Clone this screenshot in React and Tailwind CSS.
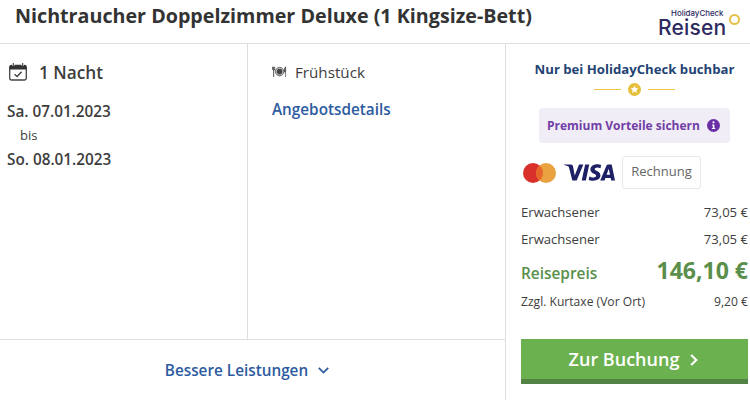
import React from "react";
import { SiVisa } from "react-icons/si";

const people = [
  { label: "Erwachsener", price: "73,05 €" },
  { label: "Erwachsener", price: "73,05 €" },
];

const CalendarIcon = () => (
  <svg className="w-[18px] h-[18px] shrink-0" viewBox="0 0 18 18" fill="none">
    <rect x="0.7" y="2.7" width="16.6" height="14.3" rx="1.8" stroke="#444" strokeWidth="1.3" />
    <path d="M0.5 6.4V4Q0.5 1.8 2.7 1.8H15.3Q17.5 1.8 17.5 4V6.4Z" fill="#333" />
    <path d="M4.3 0.4V2.8M13.7 0.4V2.8" stroke="#fff" strokeWidth="2.4" />
    <path d="M4.3 0.2V2.6M13.7 0.2V2.6" stroke="#444" strokeWidth="1.1" strokeLinecap="round" />
    <path d="M5.6 11.2L8.1 13.5L12.6 8.8" stroke="#444" strokeWidth="1.5" />
  </svg>
);

const MealIcon = () => (
  <svg className="w-[15px] h-[12px] shrink-0" viewBox="0 0 15 12" fill="none">
    <circle cx="7.6" cy="5.6" r="4.2" fill="#ccc" stroke="#555" strokeWidth="0.9" />
    <circle cx="7.6" cy="5.6" r="2.8" fill="#444" />
    <path d="M0.6 0.8V3Q0.6 4.2 1.6 4.2Q2.7 4.2 2.7 3V0.8M1.65 0.8V11" stroke="#444" strokeWidth="0.9" />
    <path d="M13.6 11V0.8Q12.2 1.8 12.4 6H13.6" fill="#444" stroke="#444" strokeWidth="0.7" />
  </svg>
);

const StarDivider = () => (
  <div className="flex h-[13px] items-center justify-center gap-[7px]">
    <span className="h-px w-[27px] bg-[#edc642]" />
    <svg className="w-[13px] h-[13px]" viewBox="0 0 14 14">
      <circle cx="7" cy="7" r="7" fill="#e6bf3c" />
      <path
        d="M7 2.9L8.2 5.5L11.1 5.8L9 7.8L9.6 10.7L7 9.2L4.4 10.7L5 7.8L2.9 5.8L5.8 5.5Z"
        fill="#fff"
      />
    </svg>
    <span className="h-px w-[27px] bg-[#edc642]" />
  </div>
);

const InfoIcon = () => (
  <svg className="w-[13px] h-[13px]" viewBox="0 0 13 13">
    <circle cx="6.5" cy="6.5" r="6.5" fill="#6a2fa5" />
    <circle cx="6.5" cy="3.3" r="1.1" fill="#fff" />
    <path d="M5 5.4H7.4V9H8.2V10.1H4.9V9H5.8V6.5H5Z" fill="#fff" />
  </svg>
);

const MastercardIcon = () => (
  <svg className="w-[33px] h-[20px]" viewBox="0 0 33 20">
    <circle cx="10" cy="10" r="10" fill="#d9302c" />
    <circle cx="23" cy="10" r="10" fill="#e9a23f" />
    <path d="M16.5 2.4A10 10 0 0 1 16.5 17.6A10 10 0 0 1 16.5 2.4Z" fill="#e7662c" />
  </svg>
);

const Header = () => (
  <header className="flex h-[44px] shrink-0 justify-between border-b border-[#dedede] pl-[15px] pr-[10px]">
    <h1 className="mt-[2px] text-[19.7px] leading-[28px] font-bold whitespace-nowrap text-[#333]">
      Nichtraucher Doppelzimmer Deluxe (1 Kingsize-Bett)
    </h1>
    <div className="flex font-['Inter',sans-serif] text-[#2c2a60]">
      <div className="w-[71px] pt-[8px]">
        <div className="pl-[13px] text-[7.9px] leading-[10px] font-medium whitespace-nowrap">
          HolidayCheck
        </div>
        <div className="mt-px text-[21px] leading-[17px] font-medium tracking-[0.2px] whitespace-nowrap">
          Reisen
        </div>
      </div>
      <span className="mt-[14px] h-[11px] w-[11px] rounded-full border-2 border-[#e6bf45]" />
    </div>
  </header>
);

const StayDetails = () => (
  <div className="w-[248px] border-r border-[#dedede] pl-[7px] pt-[16px]">
    <div className="flex h-[24px] items-center pl-[2px]">
      <CalendarIcon />
      <span className="ml-[12px] pt-px text-[17.2px] leading-[24px] font-semibold">1 Nacht</span>
    </div>
    <div className="mt-[15px] text-[15.3px] leading-[24px] font-semibold">Sa. 07.01.2023</div>
    <div className="pl-[13px] text-[13px] leading-[24px]">bis</div>
    <div className="text-[15.3px] leading-[24px] font-semibold">So. 08.01.2023</div>
  </div>
);

const BoardDetails = () => (
  <div className="flex-1 pl-[24px] pt-[16px]">
    <div className="flex h-[24px] items-center">
      <MealIcon />
      <span className="ml-[8px] text-[15.2px] leading-[24px]">Frühstück</span>
    </div>
    <a href="#" className="mt-[13px] block text-[15.3px] leading-[24px] font-semibold text-[#2d5b9f]">
      Angebotsdetails
    </a>
  </div>
);

const BookingPanel = () => (
  <aside className="w-[245px] border-l border-[#dedede] pl-[15px] pr-[2px]">
    <div className="mt-[15px] text-center text-[13.15px] leading-[20px] font-bold whitespace-nowrap text-[#234373]">
      Nur bei HolidayCheck buchbar
    </div>
    <div className="mt-[4px]">
      <StarDivider />
    </div>
    <div className="mt-[12px] ml-[18px] flex h-[35px] w-[191px] items-center justify-between rounded-[4px] bg-[#f1edf6] pl-[8px] pr-[10px]">
      <span className="text-[12px] leading-[20px] font-bold whitespace-nowrap text-[#713fa6]">
        Premium Vorteile sichern
      </span>
      <InfoIcon />
    </div>
    <div className="mt-[13px] flex h-[33px] items-center pl-[2px]">
      <MastercardIcon />
      <SiVisa className="ml-[8px] text-[#1e2065]" size={51} />
      <span className="ml-[7px] flex h-[33px] w-[79px] items-center justify-center rounded-[3px] border border-[#e8e8e8] pb-[2px] text-[13px] text-[#666]">
        Rechnung
      </span>
    </div>
    <div className="mt-[10px] text-[13.1px]">
      {people.map((p, i) => (
        <div key={i} className="flex h-[27px] items-center justify-between">
          <span>{p.label}</span>
          <span>{p.price}</span>
        </div>
      ))}
    </div>
    <div className="flex h-[36px] items-center justify-between text-[#5a8f4b]">
      <span className="pt-[5px] text-[15.4px] leading-[24px] font-semibold">Reisepreis</span>
      <span className="pb-[2px] text-[23px] leading-[32px] font-bold">146,10 €</span>
    </div>
    <div className="flex h-[26px] items-center justify-between text-[12.1px]">
      <span>Zzgl. Kurtaxe (Vor Ort)</span>
      <span>9,20 €</span>
    </div>
    <button className="mt-[24px] flex h-[45px] w-full items-center justify-center border-b-[5px] border-[#528244] bg-[#6cb150] pt-px pr-[2px] text-[18px] font-semibold text-white">
      Zur Buchung
      <svg className="ml-[11px] h-[12px] w-[8px]" viewBox="0 0 8 12" fill="none">
        <path d="M1.2 1L6.3 6L1.2 11" stroke="#fff" strokeWidth="2.1" />
      </svg>
    </button>
  </aside>
);

const App = () => {
  return (
    <div className="flex h-[400px] w-[750px] flex-col overflow-hidden bg-white font-['Open_Sans',sans-serif] text-[#3d3d3d]">
      <Header />
      <div className="flex flex-1">
        <main className="flex flex-1 flex-col">
          <div className="flex h-[296px] border-b border-[#dedede]">
            <StayDetails />
            <BoardDetails />
          </div>
          <a
            href="#"
            className="flex flex-1 items-center justify-center pr-[11px] text-[15.3px] leading-[24px] font-semibold text-[#2d5b9f]"
          >
            Bessere Leistungen
            <svg className="ml-[10px] h-[7px] w-[11px]" viewBox="0 0 11 7" fill="none">
              <path d="M0.8 0.9L5.5 5.6L10.2 0.9" stroke="#2d5b9f" strokeWidth="1.8" />
            </svg>
          </a>
        </main>
        <BookingPanel />
      </div>
    </div>
  );
};

export default App;
